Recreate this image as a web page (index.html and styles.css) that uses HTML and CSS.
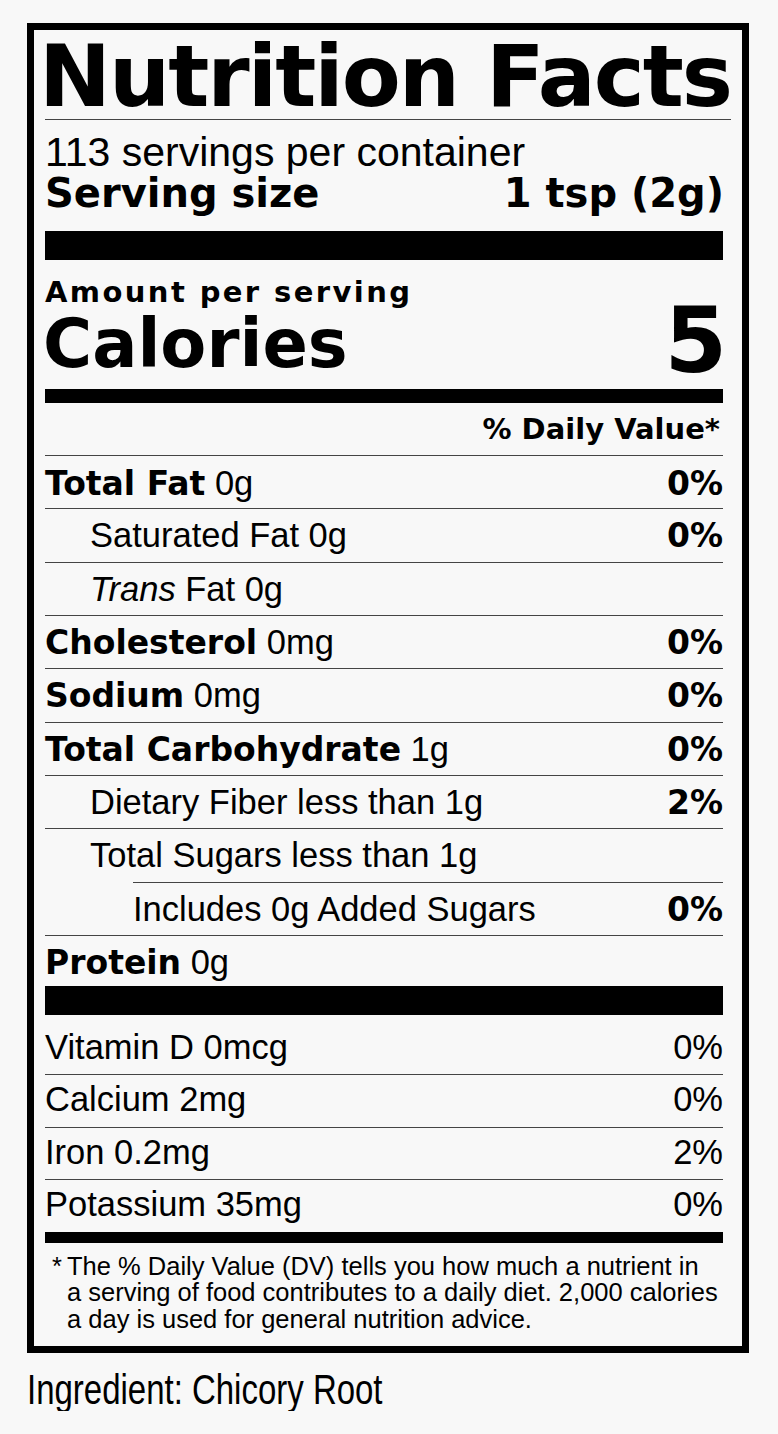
FILE: index.html
```html
<!DOCTYPE html>
<html lang="en">
<head>
<meta charset="utf-8">
<title>Nutrition Facts</title>
<link rel="stylesheet" href="styles.css">
</head>
<body>
<main class="page">
  <section class="label">
    <h1 class="title">Nutrition Facts</h1>
    <div class="servings">113 servings per container</div>
    <div class="serving-size"><span>Serving size</span><span>1 tsp (2g)</span></div>
    <div class="bar bar-xl"></div>

    <div class="calories">
      <div class="cal-left">
        <div class="amount">Amount per serving</div>
        <div class="cal-label">Calories</div>
      </div>
      <div class="cal-value">5</div>
    </div>
    <div class="bar bar-md"></div>

    <div class="dv-head">% Daily Value*</div>

    <div class="row row-first"><span class="name"><b>Total Fat</b> 0g</span><b class="pct">0%</b></div>
    <div class="row indent1"><span class="name">Saturated Fat 0g</span><b class="pct">0%</b></div>
    <div class="row indent1"><span class="name"><i>Trans</i> Fat 0g</span></div>
    <div class="row"><span class="name"><b>Cholesterol</b> 0mg</span><b class="pct">0%</b></div>
    <div class="row"><span class="name"><b>Sodium</b> 0mg</span><b class="pct">0%</b></div>
    <div class="row"><span class="name"><b>Total Carbohydrate</b> 1g</span><b class="pct">0%</b></div>
    <div class="row indent1"><span class="name">Dietary Fiber less than 1g</span><b class="pct">2%</b></div>
    <div class="row indent1"><span class="name">Total Sugars less than 1g</span></div>
    <div class="row indent2"><span class="name">Includes 0g Added Sugars</span><b class="pct">0%</b></div>
    <div class="row row-last"><span class="name"><b>Protein</b> 0g</span></div>
    <div class="bar bar-xl"></div>

    <div class="vrow vrow-first"><span>Vitamin D 0mcg</span><span>0%</span></div>
    <div class="vrow"><span>Calcium 2mg</span><span>0%</span></div>
    <div class="vrow"><span>Iron 0.2mg</span><span>2%</span></div>
    <div class="vrow"><span>Potassium 35mg</span><span>0%</span></div>
    <div class="bar bar-sm"></div>

    <p class="footnote"><span class="star">*</span><span class="note">The % Daily Value (DV) tells you how much a nutrient in<br>a serving of food contributes to a daily diet. 2,000 calories<br>a day is used for general nutrition advice.</span></p>
  </section>
  <p class="ingredient">Ingredient: Chicory Root</p>
</main>
</body>
</html>
```

FILE: styles.css
```css
html, body {
  margin: 0;
  padding: 0;
  background: #f8f8f8;
}

body {
  color: #000;
  font-family: "Liberation Sans", Arial, sans-serif;
}

.page {
  padding: 23px 0 0 27px;
}

.label {
  box-sizing: border-box;
  width: 722px;
  border: 7px solid #000;
  padding: 4px 19px 0 11px;
  background: #f8f8f8;
}

.title {
  margin: 0 -8px 0 0;
  font-family: "DejaVu Sans", sans-serif;
  font-weight: 700;
  font-size: 86px;
  line-height: 85px;
  letter-spacing: -2px;
  text-indent: -6px;
  white-space: nowrap;
  border-bottom: 1px solid #444;
}

.servings {
  padding-top: 12px;
  font-size: 41px;
  line-height: 40px;
}

.serving-size {
  display: flex;
  justify-content: space-between;
  margin-top: 1px;
  margin-right: -1px;
  font-family: "DejaVu Sans", sans-serif;
  font-weight: 700;
  font-size: 40px;
  line-height: 40px;
}

.bar {
  background: #000;
}

.bar-xl {
  height: 29px;
  margin-top: 18px;
}

.bar-md {
  height: 14px;
  margin-top: 11px;
}

.bar-sm {
  height: 11px;
}

.calories {
  display: flex;
  justify-content: space-between;
  align-items: flex-end;
  margin-top: 18px;
  font-family: "DejaVu Sans", sans-serif;
  font-weight: 700;
}

.amount {
  font-size: 29px;
  line-height: 29px;
  letter-spacing: 2.4px;
}

.cal-label {
  margin-top: 4px;
  font-size: 67px;
  line-height: 67px;
  text-indent: -2px;
}

.cal-value {
  font-size: 90px;
  line-height: 75px;
  margin-right: -4px;
}

.dv-head {
  padding: 12px 3px 11px 0;
  text-align: right;
  font-family: "DejaVu Sans", sans-serif;
  font-weight: 700;
  font-size: 29px;
  line-height: 29px;
}

.row {
  box-sizing: border-box;
  display: flex;
  justify-content: space-between;
  align-items: baseline;
  height: 53.33px;
  border-top: 1px solid #444;
  font-size: 34.5px;
  line-height: 52px;
}

.row b,
.pct {
  font-family: "DejaVu Sans", sans-serif;
  font-weight: 700;
  font-size: 33px;
}

.row i {
  font-style: italic;
}

.row-first {
  padding-top: 1px;
}

.row-last {
  height: 51px;
}

.indent1 .name {
  padding-left: 45px;
}

.indent2 {
  margin-left: 88px;
}

.row-last + .bar-xl {
  margin-top: 0;
}

.vrow {
  box-sizing: border-box;
  display: flex;
  justify-content: space-between;
  align-items: baseline;
  height: 52.67px;
  border-top: 1px solid #444;
  font-size: 34.5px;
  line-height: 48px;
}

.vrow-first {
  height: 59px;
  padding-top: 8px;
  border-top: none;
}

.footnote {
  display: flex;
  margin: 0;
  padding: 10px 0 13.5px 7px;
  font-size: 25.5px;
  line-height: 26.5px;
}

.star {
  flex: 0 0 15px;
}

.ingredient {
  margin: 16px 0 0 0;
  font-size: 42px;
  line-height: 42px;
  transform: scaleX(0.785);
  transform-origin: left center;
  white-space: nowrap;
}
```
